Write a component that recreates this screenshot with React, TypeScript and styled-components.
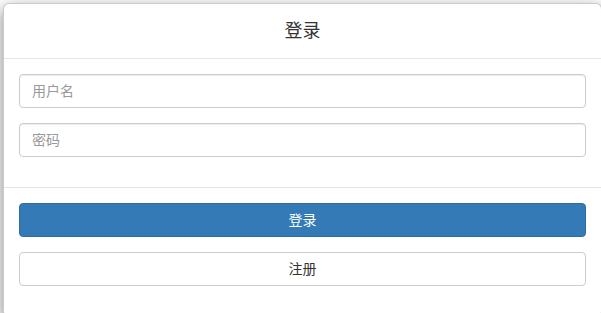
import React from "react";
import styled, { createGlobalStyle } from "styled-components";

const Global = createGlobalStyle`
  html, body { margin: 0; padding: 0; background: #fff; overflow: hidden; }
  body {
    font-family: "Liberation Sans", "Noto Sans CJK SC", sans-serif;
    font-size: 14px;
    color: #333;
  }
  * { box-sizing: border-box; }
`;

const Page = styled.div`
  padding: 3px 0 0 3px;
  width: 601px;
  height: 313px;
`;

const Modal = styled.div`
  width: 599px;
  background: #fff;
  border: 1px solid rgba(0, 0, 0, 0.2);
  border-radius: 6px;
  box-shadow: 0 5px 15px rgba(0, 0, 0, 0.5);
  display: flex;
  flex-direction: column;
`;

const Header = styled.div`
  padding: 15px;
  border-bottom: 1px solid #e5e5e5;
`;

const Title = styled.h4`
  margin: 0;
  font-size: 18px;
  line-height: 24px;
  font-weight: 400;
  text-align: center;
  color: #333;
`;

const Body = styled.div`
  padding: 15px;
  display: flex;
  flex-direction: column;
`;

const Group = styled.div`
  margin-bottom: 15px;
`;

const Input = styled.input`
  display: block;
  width: 100%;
  height: 34px;
  padding: 6px 12px;
  font-family: inherit;
  font-size: 14px;
  color: #555;
  background: #fff;
  border: 1px solid #ccc;
  border-radius: 4px;
  box-shadow: inset 0 1px 1px rgba(0, 0, 0, 0.075);
  outline: none;
  &::placeholder { color: #999; }
`;

const Footer = styled.div`
  padding: 15px 15px 30px;
  border-top: 1px solid #e5e5e5;
  display: flex;
  flex-direction: column;
  gap: 15px;
`;

const Button = styled.button<{ $primary?: boolean }>`
  display: block;
  width: 100%;
  height: 34px;
  padding: 6px 12px;
  font-family: inherit;
  font-size: 14px;
  line-height: 20px;
  border-radius: 4px;
  border: 1px solid ${(p) => (p.$primary ? "#2e6da4" : "#ccc")};
  background: ${(p) => (p.$primary ? "#337ab7" : "#fff")};
  color: ${(p) => (p.$primary ? "#fff" : "#333")};
  cursor: pointer;
`;

export default function App() {
  return (
    <>
      <Global />
      <Page>
        <Modal>
          <Header>
            <Title>登录</Title>
          </Header>
          <Body>
            <Group>
              <Input type="text" placeholder="用户名" />
            </Group>
            <Group>
              <Input type="password" placeholder="密码" />
            </Group>
          </Body>
          <Footer>
            <Button $primary>登录</Button>
            <Button>注册</Button>
          </Footer>
        </Modal>
      </Page>
    </>
  );
}
